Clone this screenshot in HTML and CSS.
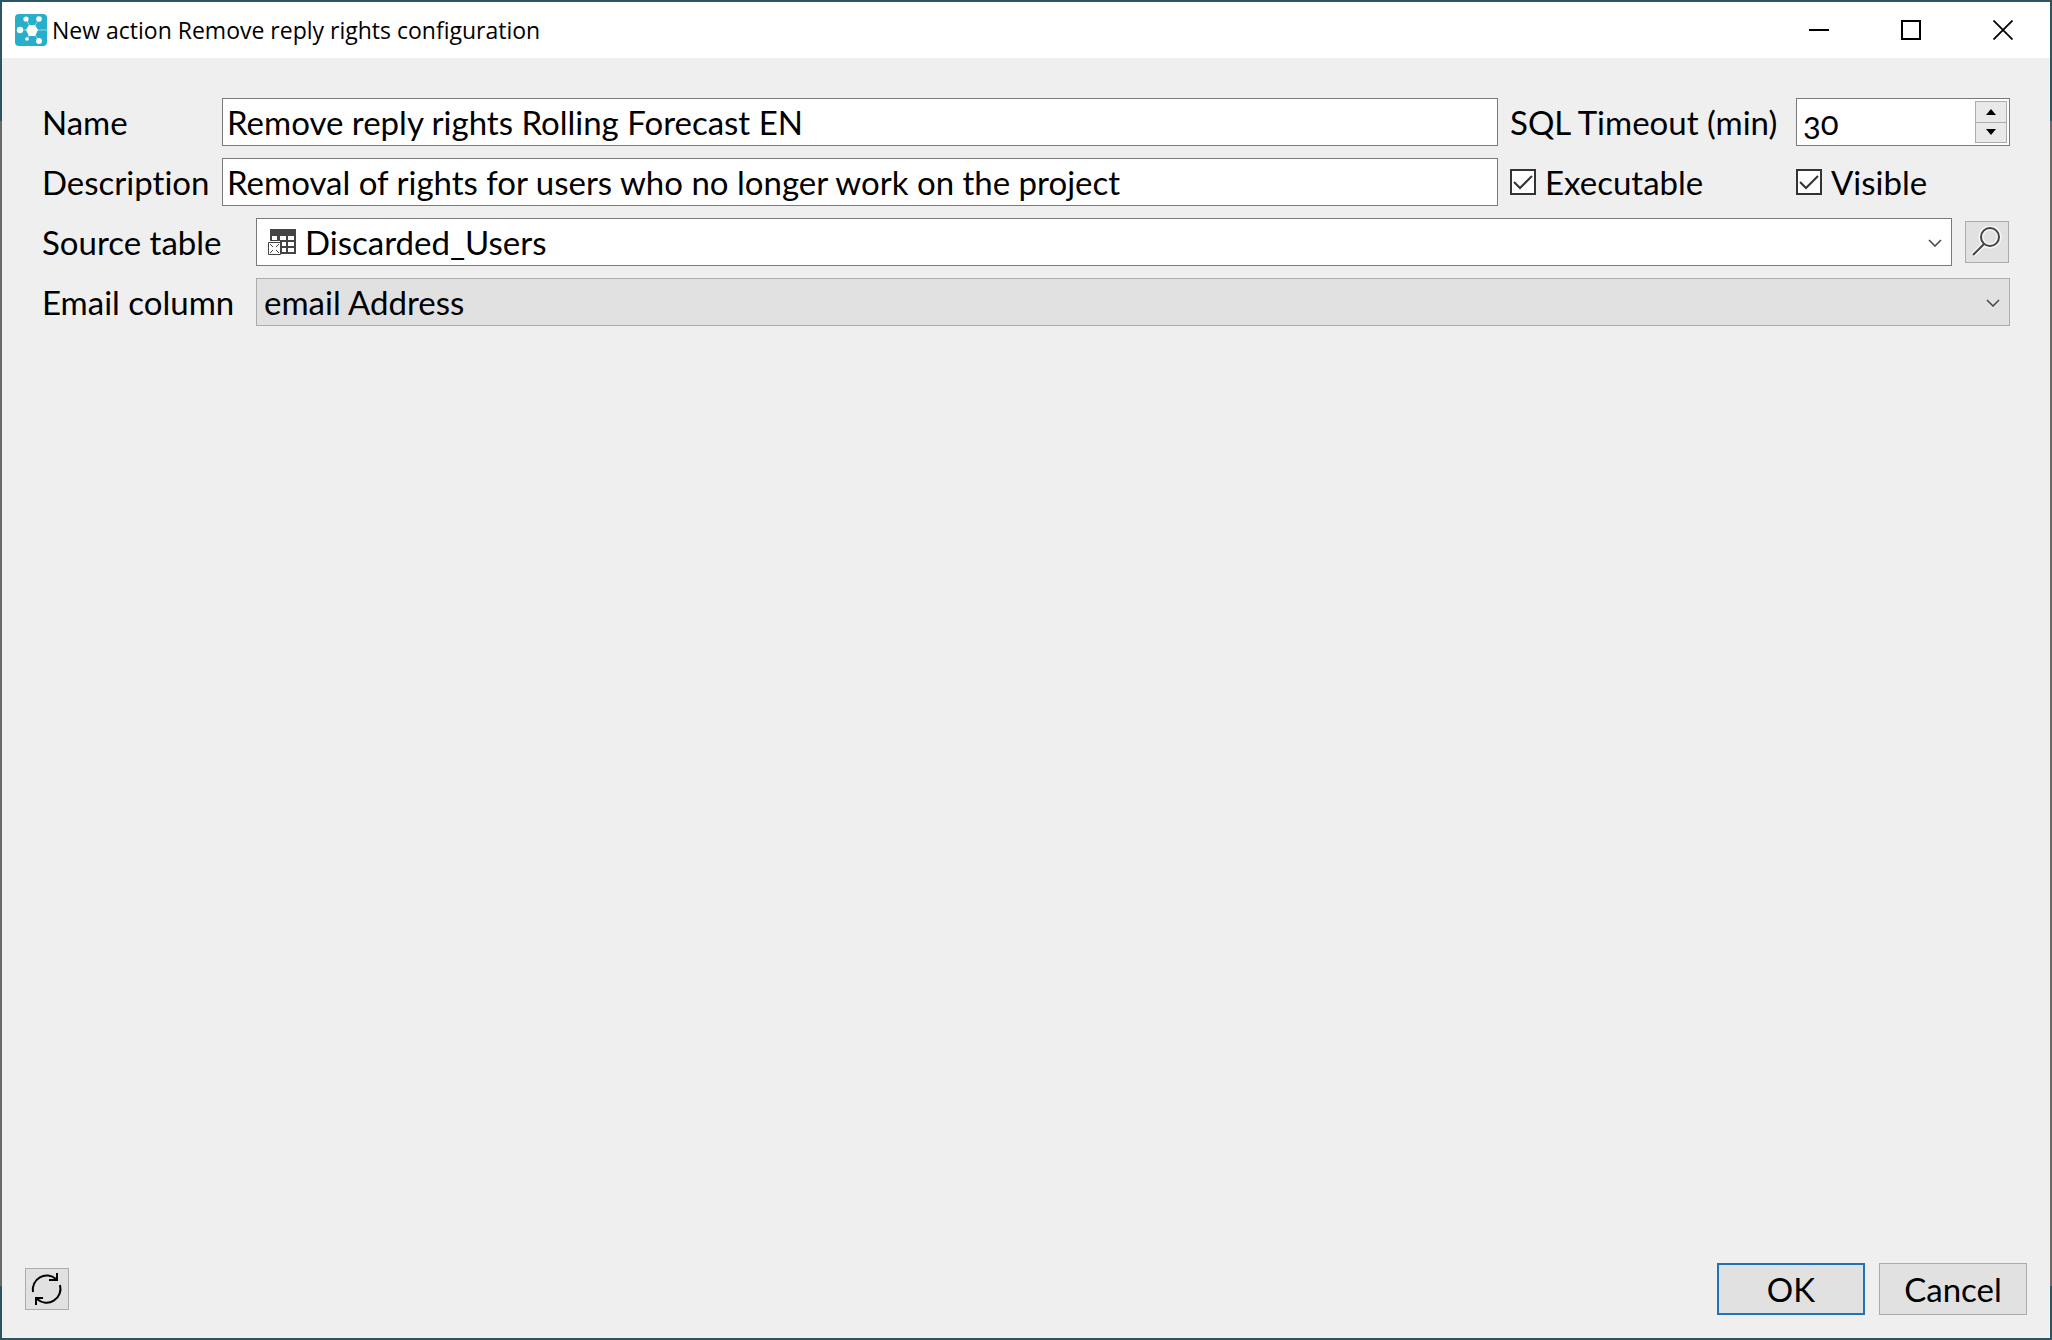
FILE: index.html
```
<!DOCTYPE html>
<html lang="en">
<head>
    <meta charset="UTF-8">
    <title>New action Remove reply rights configuration</title>
    <link rel="stylesheet" href="styles.css">
</head>
<body>
<div class="window">
    <header class="titlebar">
        <svg class="app-icon" width="32" height="32" viewBox="0 0 32 32">
            <rect width="32" height="32" rx="4" fill="#27aecb"/>
            <path d="M17 16L11 5M17 16l7-11M17 16H4M17 16l-5 9M17 16l7 11M17 16h15" stroke="#8fdcec" stroke-width="1"/>
            <path d="M14 11h6l3 5-3 6h-6l-3-6z" fill="#fff"/>
            <g fill="#fff">
                <circle cx="11" cy="5" r="2.6"/>
                <circle cx="24" cy="5" r="2.8"/>
                <circle cx="5" cy="16" r="3.2"/>
                <circle cx="12" cy="25" r="1.8"/>
                <circle cx="24" cy="27" r="3"/>
            </g>
        </svg>
        <h1 class="title">New action Remove reply rights configuration</h1>
        <button class="caption-btn" type="button" aria-label="Minimize">
            <svg width="20" height="20" viewBox="0 0 20 20"><path d="M0 10h20" stroke="#000" stroke-width="2"/></svg>
        </button>
        <button class="caption-btn" type="button" aria-label="Maximize">
            <svg width="20" height="20" viewBox="0 0 20 20"><path d="M1 1h18v18H1z" fill="none" stroke="#000" stroke-width="2"/></svg>
        </button>
        <button class="caption-btn" type="button" aria-label="Close">
            <svg width="20" height="20" viewBox="0 0 20 20"><path d="M.5.5l19 19M19.5.5l-19 19" stroke="#000" stroke-width="1.8"/></svg>
        </button>
    </header>

    <form class="config" id="config">
        <div class="general">
            <label for="name">Name</label>
            <input class="text-field" id="name" type="text" value="Remove reply rights Rolling Forecast EN">
            <label for="timeout">SQL Timeout (min)</label>
            <div class="spinner">
                <input class="text-field spinner-input" id="timeout" type="number" value="30">
                <div class="spinner-buttons">
                    <button class="step" type="button" aria-label="Increase">
                        <svg width="10" height="6" viewBox="0 0 10 6"><path d="M0 6l5-6 5 6z"/></svg>
                    </button>
                    <button class="step" type="button" aria-label="Decrease">
                        <svg width="10" height="6" viewBox="0 0 10 6"><path d="M0 0l5 6 5-6z"/></svg>
                    </button>
                </div>
            </div>

            <label for="description">Description</label>
            <input class="text-field" id="description" type="text" value="Removal of rights for users who no longer work on the project">
            <label class="check"><input class="check-box" type="checkbox" checked>Executable</label>
            <label class="check"><input class="check-box" type="checkbox" checked>Visible</label>
        </div>

        <div class="source">
            <label for="table">Source table</label>
            <div class="source-row">
                <div class="combo">
                    <select class="combo-select with-icon" id="table">
                        <option>Discarded_Users</option>
                    </select>
                    <svg class="combo-icon" width="28" height="26" viewBox="0 0 28 26">
                        <path d="M2 0h26v25H12V12H2z" fill="#444"/>
                        <path d="M4 7h5v4H4zM12 7h6v4h-6zM20 7h6v4h-6zM14 13h4v4h-4zM20 13h6v4h-6zM14 19h4v4h-4zM20 19h6v4h-6z" fill="#fff"/>
                        <path d="M.5 13.5h12v12H.5z" fill="#fff" stroke="#444"/>
                        <path d="M2 15l3 3M11 15l-3 3M2 24l3-3M11 24l-3-3" stroke="#444"/>
                    </svg>
                    <svg class="combo-arrow" width="14" height="8" viewBox="0 0 14 8"><path d="M1 1l6 6 6-6" fill="none" stroke="#444" stroke-width="1.5"/></svg>
                </div>
                <button class="icon-btn search" type="button" aria-label="Search table">
                    <svg width="32" height="32" viewBox="0 0 32 32" fill="none">
                        <g stroke="#f6f6f6" stroke-width="5"><circle cx="19" cy="11" r="9"/><path d="M13 18L2 29"/></g>
                        <g stroke="#444" stroke-width="2"><circle cx="19" cy="11" r="9"/><path d="M13 18L2 29"/></g>
                    </svg>
                </button>
            </div>

            <label for="email">Email column</label>
            <div class="combo">
                <select class="combo-select grey" id="email">
                    <option>email Address</option>
                </select>
                <svg class="combo-arrow" width="14" height="8" viewBox="0 0 14 8"><path d="M1 1l6 6 6-6" fill="none" stroke="#444" stroke-width="1.5"/></svg>
            </div>
        </div>
    </form>

    <footer class="footer">
        <button class="icon-btn" type="button" aria-label="Refresh">
            <svg width="32" height="32" viewBox="0 0 32 32" fill="none" stroke="#000" stroke-width="2">
                <path d="M2 19A14 14 0 0 1 25 6M26 0v7h-8"/>
                <path d="M29 12A14 14 0 0 1 6 26M5 32v-7h7"/>
            </svg>
        </button>
        <div class="actions">
            <button class="btn btn-default" type="submit" form="config">OK</button>
            <button class="btn" type="button">Cancel</button>
        </div>
    </footer>
</div>
</body>
</html>
```
FILE: styles.css
```
* {
    box-sizing: border-box;
}

body {
    margin: 0;
    font-family: Lato, "Open Sans", sans-serif;
    font-size: 33px;
    line-height: 40px;
    font-variant-ligatures: none;
    color: #000;
    background-color: #2b5560;
}

button, input, select {
    margin: 0;
    font: inherit;
    color: inherit;
}

svg {
    display: block;
}

/* window frame, the desktop shows through at the sides */
.window {
    display: flex;
    flex-direction: column;
    min-height: 100vh;
    border: 2px solid #2b5560;
    border-image: linear-gradient(#2b5560 9%, #6b6868 9%, #6b6868 96%, #2b5560 96%) 2;
    background-color: #efefef;
}

.titlebar {
    display: flex;
    align-items: center;
    height: 56px;
    padding: 0 1px 0 13px;
    background-color: #fff;
}

.title {
    flex: 1;
    margin: 0 0 0 5px;
    font-family: "Open Sans", "Noto Sans", sans-serif;
    font-size: 23px;
    font-weight: 400;
    line-height: 32px;
}

.caption-btn {
    display: flex;
    align-items: center;
    justify-content: center;
    width: 92px;
    height: 56px;
    padding: 0;
    border: 0;
    background: none;
}

/* form */
.config {
    display: flex;
    flex: 1;
    flex-direction: column;
    gap: 12px;
    padding: 40px;
}

.general {
    display: grid;
    grid-template-columns: 168px 1fr 274px 214px;
    align-items: center;
    gap: 12px;
}

.source {
    display: grid;
    grid-template-columns: 202px 1fr;
    align-items: center;
    gap: 12px;
}

label {
    white-space: nowrap;
}

.text-field {
    width: 100%;
    height: 48px;
    padding: 0 4px;
    border: 1px solid #7a7a7a;
    background-color: #fff;
}

.spinner {
    display: flex;
    height: 48px;
    padding: 2px;
    border: 1px solid #7a7a7a;
    background-color: #fff;
}

.spinner-input {
    flex: 1;
    min-width: 0;
    height: 42px;
    border: 0;
    font-feature-settings: "onum";
    appearance: textfield;
}

.spinner-buttons {
    display: flex;
    flex-direction: column;
    width: 32px;
}

.step {
    display: flex;
    flex: 1;
    align-items: center;
    justify-content: center;
    padding: 0;
    border: 1px solid #acacac;
    background-color: #e9e9e9;
}

.step + .step {
    border-top: 0;
}

.check {
    display: flex;
    align-items: center;
    gap: 9px;
}

.check-box {
    width: 26px;
    height: 26px;
    border: 2px solid #333;
    background: #fff url("data:image/svg+xml,%3Csvg xmlns='http://www.w3.org/2000/svg' viewBox='0 0 22 22'%3E%3Cpath d='M2 11l6 6L20 5' fill='none' stroke='%23333' stroke-width='2'/%3E%3C/svg%3E") center / 22px 22px no-repeat;
    appearance: none;
}

.source-row {
    display: flex;
    align-items: center;
    gap: 12px;
}

.combo {
    position: relative;
    flex: 1;
}

.combo-select {
    display: block;
    width: 100%;
    height: 48px;
    padding: 0 36px 0 7px;
    border: 1px solid #7a7a7a;
    border-radius: 0;
    background-color: #fff;
    appearance: none;
}

.combo-select.with-icon {
    padding-left: 48px;
}

.combo-select.grey {
    border-color: #acacac;
    background-color: #e1e1e1;
}

.combo-icon {
    position: absolute;
    top: 11px;
    left: 12px;
    pointer-events: none;
}

.combo-arrow {
    position: absolute;
    top: 21px;
    right: 10px;
    pointer-events: none;
}

.icon-btn {
    display: flex;
    align-items: center;
    justify-content: center;
    width: 44px;
    height: 42px;
    padding: 0;
    border: 1px solid #acacac;
    background-color: #e1e1e1;
}

.icon-btn.search {
    margin: 0 1px;
}

/* bottom bar */
.footer {
    display: flex;
    align-items: center;
    justify-content: space-between;
    padding: 0 23px 23px;
}

.actions {
    display: flex;
    gap: 14px;
}

.btn {
    width: 148px;
    height: 52px;
    padding: 0;
    border: 1px solid #acacac;
    background-color: #e1e1e1;
}

.btn-default {
    border: 2px solid #1f74b8;
}
```
